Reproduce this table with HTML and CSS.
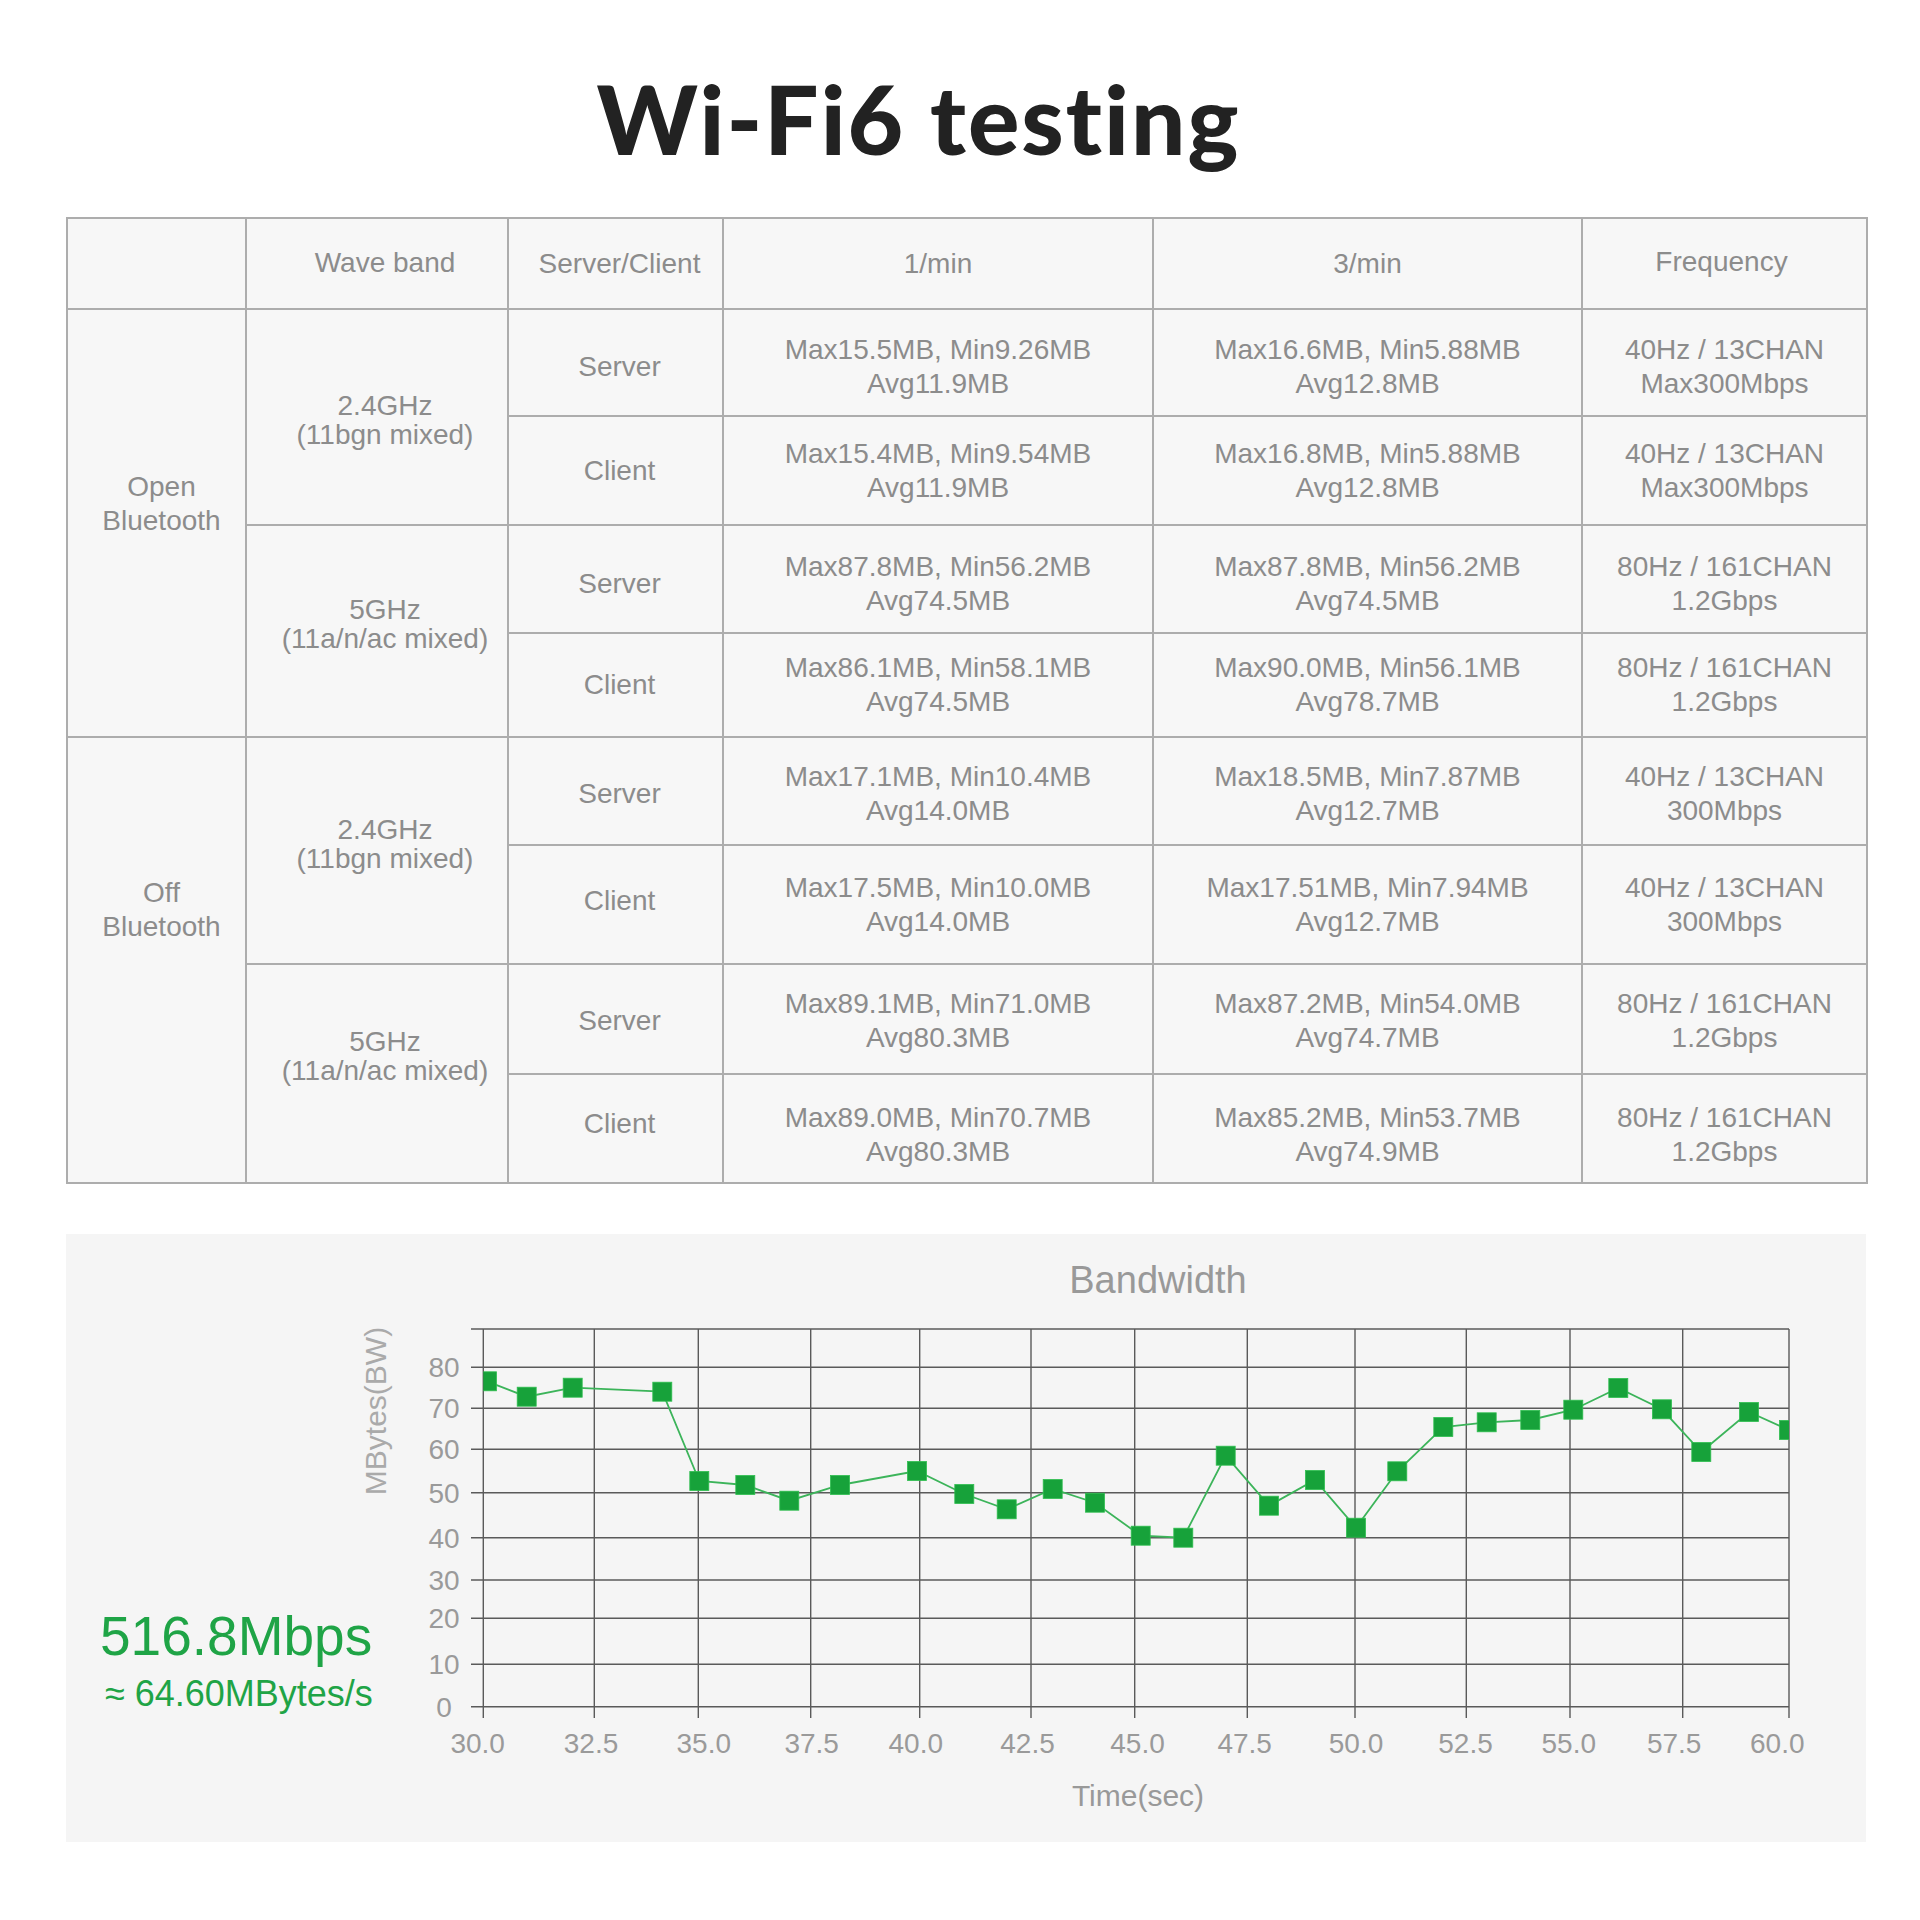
FILE: index.html
```html
<!DOCTYPE html>
<html lang="en">
<head>
<meta charset="utf-8">
<title>Wi-Fi6 testing</title>
<link rel="stylesheet" href="styles.css">
</head>
<body>
<main class="page">
  <h1 class="title">Wi-Fi6 testing</h1>

  <table class="results">
    <colgroup>
      <col class="c-bt"><col class="c-band"><col class="c-role"><col class="c-min1"><col class="c-min3"><col class="c-freq">
    </colgroup>
    <thead>
      <tr class="h-head"><th class="bt"></th><th class="band">Wave band</th><th class="role">Server/Client</th><th>1/min</th><th>3/min</th><th class="freq-head">Frequency</th></tr>
    </thead>
    <tbody>
      <tr class="h-107 shift-4">
        <td rowspan="4" class="bt bt-open">Open<br>Bluetooth</td>
        <td rowspan="2" class="band band-24-open">2.4GHz<br>(11bgn mixed)</td>
        <td class="role">Server</td>
        <td>Max15.5MB, Min9.26MB<br>Avg11.9MB</td>
        <td>Max16.6MB, Min5.88MB<br>Avg12.8MB</td>
        <td>40Hz / 13CHAN<br>Max300Mbps</td>
      </tr>
      <tr class="h-109">
        <td class="role">Client</td>
        <td>Max15.4MB, Min9.54MB<br>Avg11.9MB</td>
        <td>Max16.8MB, Min5.88MB<br>Avg12.8MB</td>
        <td>40Hz / 13CHAN<br>Max300Mbps</td>
      </tr>
      <tr class="h-108 shift-5">
        <td rowspan="2" class="band band-5-open">5GHz<br>(11a/n/ac mixed)</td>
        <td class="role">Server</td>
        <td>Max87.8MB, Min56.2MB<br>Avg74.5MB</td>
        <td>Max87.8MB, Min56.2MB<br>Avg74.5MB</td>
        <td>80Hz / 161CHAN<br>1.2Gbps</td>
      </tr>
      <tr class="h-104">
        <td class="role">Client</td>
        <td>Max86.1MB, Min58.1MB<br>Avg74.5MB</td>
        <td>Max90.0MB, Min56.1MB<br>Avg78.7MB</td>
        <td>80Hz / 161CHAN<br>1.2Gbps</td>
      </tr>
      <tr class="h-108 shift-3">
        <td rowspan="4" class="bt bt-off">Off<br>Bluetooth</td>
        <td rowspan="2" class="band band-24-off">2.4GHz<br>(11bgn mixed)</td>
        <td class="role">Server</td>
        <td>Max17.1MB, Min10.4MB<br>Avg14.0MB</td>
        <td>Max18.5MB, Min7.87MB<br>Avg12.7MB</td>
        <td>40Hz / 13CHAN<br>300Mbps</td>
      </tr>
      <tr class="h-119">
        <td class="role role-up-4">Client</td>
        <td>Max17.5MB, Min10.0MB<br>Avg14.0MB</td>
        <td>Max17.51MB, Min7.94MB<br>Avg12.7MB</td>
        <td>40Hz / 13CHAN<br>300Mbps</td>
      </tr>
      <tr class="h-110 shift-2">
        <td rowspan="2" class="band band-5-off">5GHz<br>(11a/n/ac mixed)</td>
        <td class="role">Server</td>
        <td>Max89.1MB, Min71.0MB<br>Avg80.3MB</td>
        <td>Max87.2MB, Min54.0MB<br>Avg74.7MB</td>
        <td>80Hz / 161CHAN<br>1.2Gbps</td>
      </tr>
      <tr class="h-109 shift-6">
        <td class="role role-up-11">Client</td>
        <td>Max89.0MB, Min70.7MB<br>Avg80.3MB</td>
        <td>Max85.2MB, Min53.7MB<br>Avg74.9MB</td>
        <td>80Hz / 161CHAN<br>1.2Gbps</td>
      </tr>
    </tbody>
  </table>

  <section class="panel">
    <div class="stats">
      <div class="stats-main">516.8Mbps</div>
      <div class="stats-sub">≈ 64.60MBytes/s</div>
    </div>
    <svg class="chart" width="1526" height="606" viewBox="0 0 1526 606" xmlns="http://www.w3.org/2000/svg">
      <defs>
        <clipPath id="plot"><rect x="143.3" y="95" width="1305.7" height="378"/></clipPath>
      </defs>
      <text class="chart-title" x="818" y="59" text-anchor="middle">Bandwidth</text>
      <text class="axis-title-y" transform="translate(45.6,177) rotate(-90)" text-anchor="middle">MBytes(BW)</text>
      <text class="axis-title-x" x="798" y="572" text-anchor="middle">Time(sec)</text>

      <g class="grid">
        <line x1="131" y1="95" x2="1449" y2="95"/>
        <line x1="131" y1="133.3" x2="1449" y2="133.3"/>
        <line x1="131" y1="174.3" x2="1449" y2="174.3"/>
        <line x1="131" y1="215.3" x2="1449" y2="215.3"/>
        <line x1="131" y1="258.7" x2="1449" y2="258.7"/>
        <line x1="131" y1="303.7" x2="1449" y2="303.7"/>
        <line x1="131" y1="346" x2="1449" y2="346"/>
        <line x1="131" y1="384.3" x2="1449" y2="384.3"/>
        <line x1="131" y1="430.3" x2="1449" y2="430.3"/>
        <line x1="131" y1="472.7" x2="1449" y2="472.7"/>

        <line x1="143.3" y1="95" x2="143.3" y2="484"/>
        <line x1="254.3" y1="95" x2="254.3" y2="484"/>
        <line x1="358.3" y1="95" x2="358.3" y2="484"/>
        <line x1="470.7" y1="95" x2="470.7" y2="484"/>
        <line x1="579.7" y1="95" x2="579.7" y2="484"/>
        <line x1="691" y1="95" x2="691" y2="484"/>
        <line x1="794.7" y1="95" x2="794.7" y2="484"/>
        <line x1="907.3" y1="95" x2="907.3" y2="484"/>
        <line x1="1015" y1="95" x2="1015" y2="484"/>
        <line x1="1126.3" y1="95" x2="1126.3" y2="484"/>
        <line x1="1230" y1="95" x2="1230" y2="484"/>
        <line x1="1342.7" y1="95" x2="1342.7" y2="484"/>
        <line x1="1449" y1="95" x2="1449" y2="484"/>
      </g>

      <g class="ticks-y" text-anchor="middle">
        <text x="104" y="143.3">80</text>
        <text x="104" y="184.3">70</text>
        <text x="104" y="225.3">60</text>
        <text x="104" y="268.7">50</text>
        <text x="104" y="313.7">40</text>
        <text x="104" y="356">30</text>
        <text x="104" y="394.3">20</text>
        <text x="104" y="440.3">10</text>
        <text x="104" y="482.7">0</text>
      </g>

      <g class="ticks-x" text-anchor="middle">
        <text x="137.7" y="519">30.0</text>
        <text x="251" y="519">32.5</text>
        <text x="363.8" y="519">35.0</text>
        <text x="471.7" y="519">37.5</text>
        <text x="575.8" y="519">40.0</text>
        <text x="687.5" y="519">42.5</text>
        <text x="797.5" y="519">45.0</text>
        <text x="904.7" y="519">47.5</text>
        <text x="1016" y="519">50.0</text>
        <text x="1125.5" y="519">52.5</text>
        <text x="1228.8" y="519">55.0</text>
        <text x="1334.2" y="519">57.5</text>
        <text x="1437.3" y="519">60.0</text>
      </g>

      <g clip-path="url(#plot)">
        <polyline class="series-line" points="147,147.3 186.7,162.7 232.7,153.7 322.3,157.7 359.3,247 405.3,251 449.3,266.7 500,251 577,237 624.3,260 666.7,275.3 712.7,255 755,268.7 800.7,301.7 843.3,303.7 885.7,221.7 929,271.7 975,246 1016,293.7 1057.3,237.3 1103.3,193 1146.7,188.3 1190.3,186 1233.3,175.7 1278.3,154 1322,175.3 1361.3,218 1409,178 1449,196"/>
        <g class="series-marks">
          <rect x="137.5" y="137.8" width="19" height="19"/>
          <rect x="177.2" y="153.2" width="19" height="19"/>
          <rect x="223.2" y="144.2" width="19" height="19"/>
          <rect x="312.8" y="148.2" width="19" height="19"/>
          <rect x="349.8" y="237.5" width="19" height="19"/>
          <rect x="395.8" y="241.5" width="19" height="19"/>
          <rect x="439.8" y="257.2" width="19" height="19"/>
          <rect x="490.5" y="241.5" width="19" height="19"/>
          <rect x="567.5" y="227.5" width="19" height="19"/>
          <rect x="614.8" y="250.5" width="19" height="19"/>
          <rect x="657.2" y="265.8" width="19" height="19"/>
          <rect x="703.2" y="245.5" width="19" height="19"/>
          <rect x="745.5" y="259.2" width="19" height="19"/>
          <rect x="791.2" y="292.2" width="19" height="19"/>
          <rect x="833.8" y="294.2" width="19" height="19"/>
          <rect x="876.2" y="212.2" width="19" height="19"/>
          <rect x="919.5" y="262.2" width="19" height="19"/>
          <rect x="965.5" y="236.5" width="19" height="19"/>
          <rect x="1006.5" y="284.2" width="19" height="19"/>
          <rect x="1047.8" y="227.8" width="19" height="19"/>
          <rect x="1093.8" y="183.5" width="19" height="19"/>
          <rect x="1137.2" y="178.8" width="19" height="19"/>
          <rect x="1180.8" y="176.5" width="19" height="19"/>
          <rect x="1223.8" y="166.2" width="19" height="19"/>
          <rect x="1268.8" y="144.5" width="19" height="19"/>
          <rect x="1312.5" y="165.8" width="19" height="19"/>
          <rect x="1351.8" y="208.5" width="19" height="19"/>
          <rect x="1399.5" y="168.5" width="19" height="19"/>
          <rect x="1439.5" y="186.5" width="19" height="19"/>
        </g>
      </g>
    </svg>
  </section>
</main>
</body>
</html>
```

FILE: styles.css
```css
* {
  box-sizing: border-box;
}

body {
  margin: 0;
  background: #ffffff;
  font-family: "Liberation Sans", Arial, sans-serif;
}

.page {
  width: 1866px;
  padding: 70px 0 0 66px;
}

.title {
  margin: 0;
  width: 1800px;
  padding-right: 95px;
  text-align: center;
  font-family: Lato, "Open Sans", sans-serif;
  font-weight: 900;
  font-size: 96px;
  line-height: 96px;
  color: #222222;
  letter-spacing: 2px;
  font-variant-ligatures: none;
  font-feature-settings: "liga" 0, "dlig" 0;
}

/* ---------- table ---------- */
.results {
  margin-top: 51px;
  width: 1800px;
  border-collapse: collapse;
  table-layout: fixed;
  background: #f7f7f7;
}

.c-bt   { width: 179px; }
.c-band { width: 262px; }
.c-role { width: 215px; }
.c-min1 { width: 430px; }
.c-min3 { width: 429px; }
.c-freq { width: 285px; }

.results th,
.results td {
  border: 2px solid #adadad;
  padding: 0;
  text-align: center;
  vertical-align: middle;
  font-size: 28px;
  line-height: 1.2;
  font-weight: normal;
  color: #8c8c8c;
}

.results .bt   { padding-left: 10px; }
.results .band { padding-left: 16px; line-height: 28.6px; }
.results .role { padding-left: 8px; }

.results .freq-head {
  padding-bottom: 4px;
  padding-right: 6px;
}

.h-head { height: 91px; }
.h-104  { height: 104px; }
.h-107  { height: 107px; }
.h-108  { height: 108px; }
.h-109  { height: 109px; }
.h-110  { height: 110px; }
.h-119  { height: 119px; }

/* fine vertical placement of row text */
.shift-2 td:not([rowspan]) { padding-top: 4px; }
.shift-3 td:not([rowspan]) { padding-top: 6px; }
.shift-4 td:not([rowspan]) { padding-top: 8px; }
.shift-5 td:not([rowspan]) { padding-top: 10px; }
.shift-6 td:not([rowspan]) { padding-top: 13px; }
.results .role-up-4  { padding-top: 0; padding-bottom: 8px; }
.results .role-up-11 { padding-top: 0; padding-bottom: 22px; }

.results .bt-open  { padding-bottom: 38px; }
.results .bt-off   { padding-bottom: 100px; }
.results .band-24-open { padding-top: 8px; }
.results .band-5-open  { padding-bottom: 12px; }
.results .band-24-off  { padding-bottom: 11px; }
.results .band-5-off   { padding-bottom: 34px; }

/* ---------- chart panel ---------- */
.panel {
  margin-top: 50px;
  width: 1800px;
  height: 608px;
  background: #f5f5f5;
  display: flex;
}

.stats {
  width: 274px;
  padding: 0 0 130px 34px;
  display: flex;
  flex-direction: column;
  justify-content: flex-end;
  color: #1fa446;
  white-space: nowrap;
}

.stats-main {
  font-size: 55px;
  line-height: 55px;
}

.stats-sub {
  margin-top: 12px;
  padding-left: 5px;
  font-size: 36px;
  line-height: 36px;
}

.chart {
  display: block;
  flex: none;
  font-family: "Liberation Sans", Arial, sans-serif;
}

.chart-title {
  font-size: 38px;
  fill: #999999;
}

.axis-title-x {
  font-size: 30px;
  fill: #999999;
}

.axis-title-y {
  font-size: 30px;
  fill: #aaaaaa;
}

.ticks-y text,
.ticks-x text {
  font-size: 28px;
  fill: #9a9a9a;
}

.grid line {
  stroke: #5a5a5a;
  stroke-width: 1.4;
}

.series-line {
  fill: none;
  stroke: #3cb45a;
  stroke-width: 1.8;
}

.series-marks rect {
  fill: #17a23a;
  stroke: #2fbf4f;
  stroke-width: 0.8;
}
```
